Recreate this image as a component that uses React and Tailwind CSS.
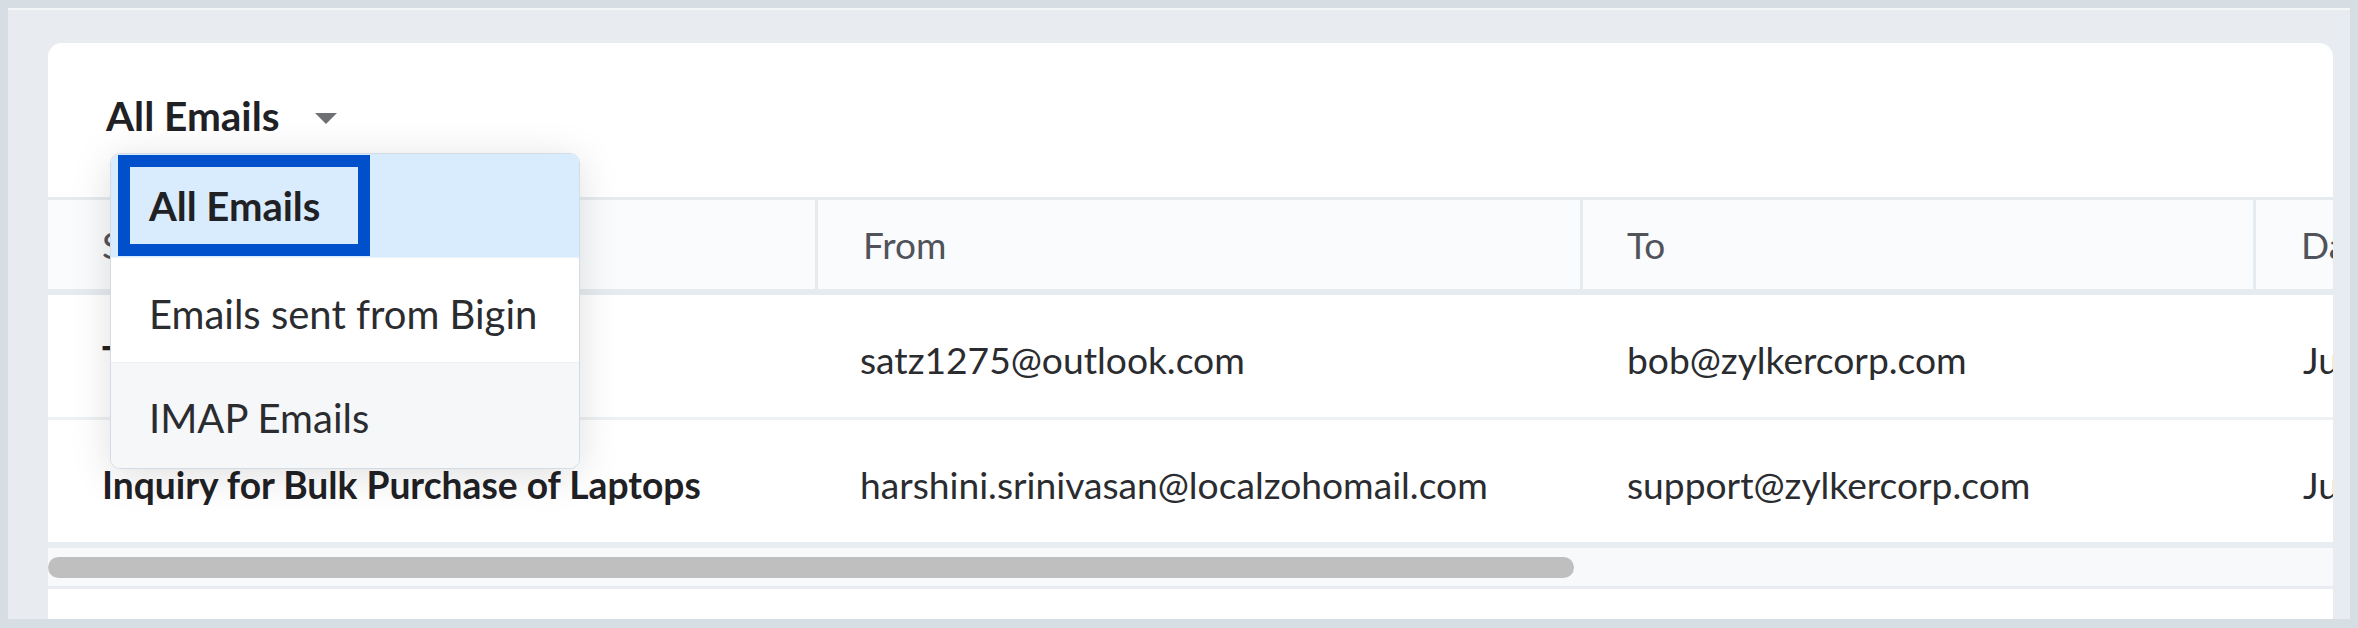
import { useState } from 'react'

const columns = [
  { key: 'subject', label: 'Subject', width: 'w-[767px]', pad: 'pl-[54px]' },
  { key: 'from', label: 'From', width: 'w-[765px]', pad: 'pl-[45px]' },
  { key: 'to', label: 'To', width: 'w-[673px]', pad: 'pl-[44px]' },
  { key: 'date', label: 'Date', width: 'w-[420px]', pad: 'pl-[45px]' },
]

const emails = [
  {
    id: 1,
    subject: 'Trial Extension Request',
    from: 'satz1275@outlook.com',
    to: 'bob@zylkercorp.com',
    date: 'Jun 12, 2024 10:42 AM',
  },
  {
    id: 2,
    subject: 'Inquiry for Bulk Purchase of Laptops',
    from: 'harshini.srinivasan@localzohomail.com',
    to: 'support@zylkercorp.com',
    date: 'Jun 10, 2024 04:15 PM',
  },
]

const filters = ['All Emails', 'Emails sent from Bigin', 'IMAP Emails']

function FilterMenu({ selected }) {
  return (
    <div className="absolute left-[62px] top-[110px] z-10 w-[470px] overflow-hidden rounded-[10px] border border-[#d3dce5] bg-white shadow-[0_6px_40px_rgba(0,0,0,0.13)]">
      {/* selected row, with the blue focus frame */}
      <div className="flex h-[104px] items-stretch border-b border-[#eaf1f8] bg-[#d9ecfd] py-px pl-[7px]">
        <div className="flex w-[252px] items-center border-[12px] border-[#0050cc] pl-[19px] text-[40px] font-bold text-[#1f2125]">
          {selected}
        </div>
      </div>
      <div className="flex h-[105px] items-center border-b border-[#eef1f4] bg-white pl-[38px] pt-[7px] text-[40px] text-[#2a2c30]">
        {filters[1]}
      </div>
      <div className="flex h-[105px] items-center bg-[#f5f7f9] pl-[38px] pt-[4px] text-[40px] text-[#2a2c30]">
        {filters[2]}
      </div>
    </div>
  )
}

function EmailTable() {
  return (
    <div className="w-[2625px]">
      <div className="flex h-[98px] border-t-[3px] border-b-[6px] border-[#e6ebf0] bg-[#fafbfc]">
        {columns.map((c, i) => (
          <div
            key={c.key}
            className={`flex shrink-0 items-center ${c.width} ${c.pad} text-[37px] text-[#50535a] ${i > 0 ? 'border-l-[3px] border-[#e6ebf0]' : ''}`}
          >
            {c.label}
          </div>
        ))}
      </div>

      {emails.map((e, idx) => {
        const last = idx === emails.length - 1
        return (
          <div
            key={e.id}
            className={`flex bg-white pt-[7px] text-[37.2px] text-[#2a2c30] ${last ? 'h-[128px] border-b-[6px] border-[#e8edf2]' : 'h-[125px] border-b-[3px] border-[#eef1f4]'}`}
          >
            <div className="flex w-[767px] shrink-0 items-center pl-[54px] font-bold text-[#1f2125]">{e.subject}</div>
            <div className="flex w-[768px] shrink-0 items-center pl-[45px]">{e.from}</div>
            <div className="flex w-[676px] shrink-0 items-center pl-[44px]">{e.to}</div>
            <div className="flex w-[420px] shrink-0 items-center whitespace-nowrap pl-[44px]">{e.date}</div>
          </div>
        )
      })}

      {/* horizontal scroll track */}
      <div className="h-[41px] border-b-[3px] border-[#e9edf1] bg-[#f7f9fb] pt-[9px]">
        <div className="h-[21px] w-[1526px] rounded-full bg-[#bfbfbf]" />
      </div>
    </div>
  )
}

export default function App() {
  const [selected] = useState('All Emails')

  return (
    <div className="h-[628px] w-[2358px] overflow-hidden bg-[#d6dee4] px-[8px] pt-[8px] pb-[9px] font-['Lato','Noto_Sans',sans-serif]">
      <div className="h-full overflow-hidden border-t-2 border-[#f4f6f8] bg-[#e8ecf0] pl-[40px] pr-[17px] pt-[33px]">
        <div className="relative h-[640px] overflow-hidden rounded-t-[14px] bg-white">
          <div className="flex h-[154px] items-start pl-[58px] pt-[53px]">
            <button className="flex items-center gap-[35px] text-[40.5px] font-bold leading-none text-[#1f2125]">
              <span>{selected}</span>
              <svg width="22" height="11" viewBox="0 0 22 11" className="mt-[4px]">
                <path d="M0 0h22L11 11z" fill="#6f7074" />
              </svg>
            </button>
          </div>
          <EmailTable />
          <FilterMenu selected={selected} />
        </div>
      </div>
    </div>
  )
}
